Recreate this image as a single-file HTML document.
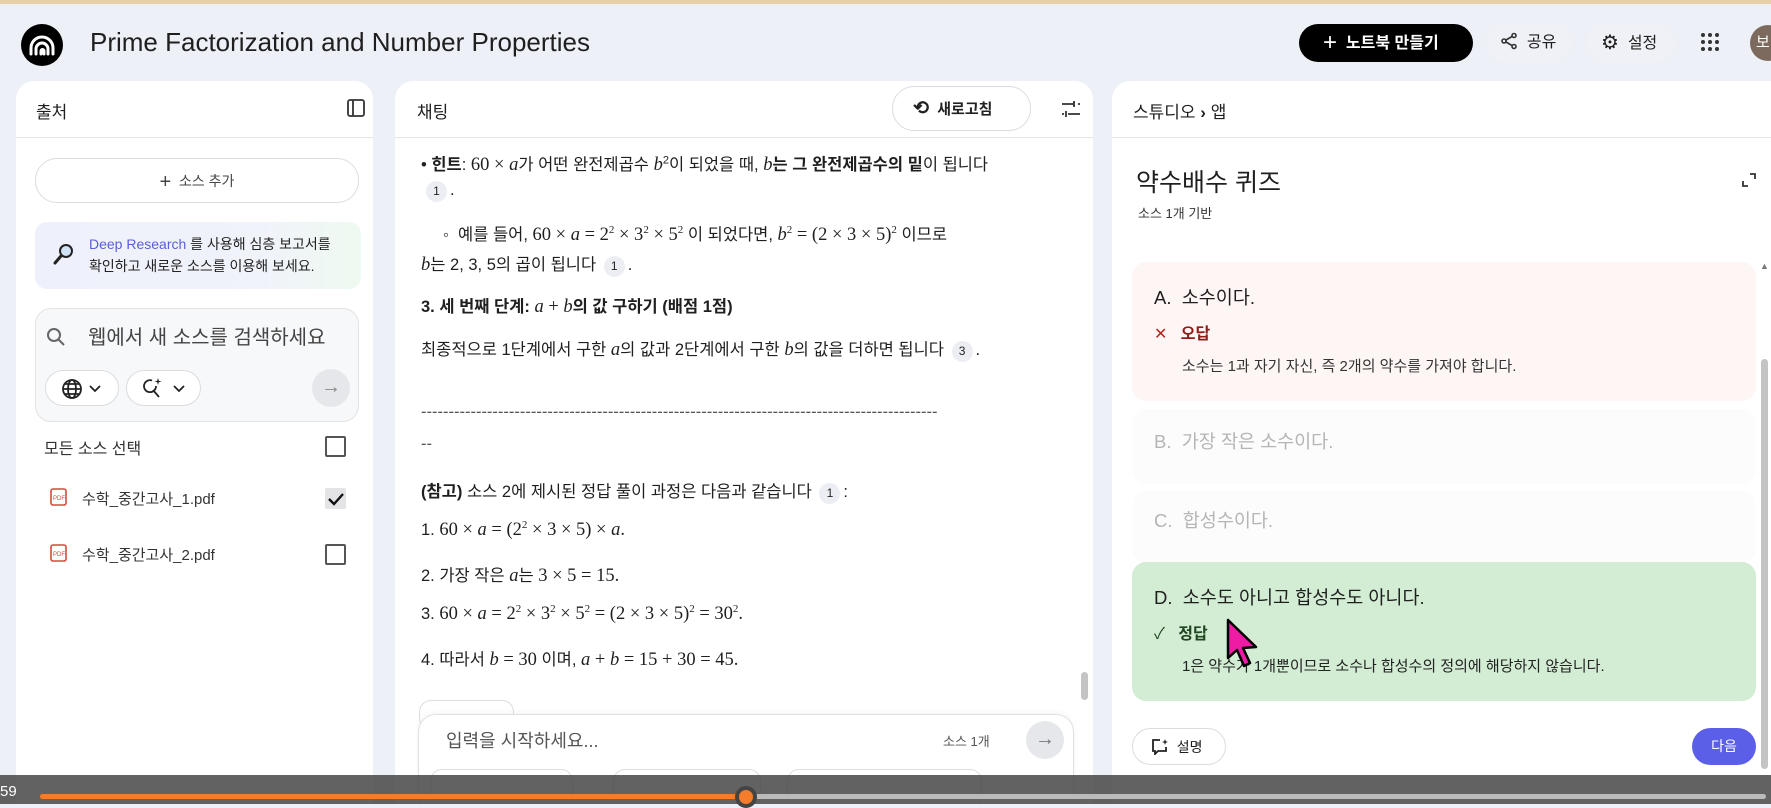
<!DOCTYPE html>
<html><head><meta charset="utf-8">
<style>
*{margin:0;padding:0;box-sizing:border-box}
body{width:1771px;height:804px;overflow:hidden;background:#eef0f8;font-family:"Liberation Sans","Noto Sans CJK KR",sans-serif;color:#1f1f1f;position:relative}
.a{position:absolute;white-space:nowrap}
.panel{position:absolute;background:#fff;border-radius:18px 18px 0 0;top:81px;height:723px;overflow:hidden}
.m{font-family:"Liberation Serif",serif;font-size:18.5px}
.i{font-style:italic}
.cite{display:inline-block;width:21px;height:21px;border-radius:11px;background:#eceef4;font-size:12px;text-align:center;line-height:21px;margin:0 3px}
.ct{font-size:16.5px;color:#1f1f1f}
.pill{position:absolute;border:1px solid #dadce0;border-radius:22px;background:#fff}
sup{font-size:11px}
</style></head><body>
<div class="a" style="left:0;top:0;width:1771px;height:4px;background:#e9cfa8"></div>
<!-- header -->
<div class="a" style="left:21px;top:24px;width:42px;height:42px;border-radius:50%;background:#000"></div>
<svg class="a" style="left:21px;top:24px" width="42" height="42" viewBox="0 0 42 42" fill="none" stroke="#fff" stroke-width="3" stroke-linecap="round"><path d="M10 30 V24 a11 11 0 0 1 22 0 V30"/><path d="M15 30 V25 a6 6 0 0 1 12 0 V30"/><path d="M20 30 V27 a1.5 1.5 0 0 1 3 0 V30"/></svg>
<div class="a" style="left:90px;top:27px;font-size:26px">Prime Factorization and Number Properties</div>
<div class="a" style="left:1299px;top:24px;width:174px;height:38px;background:#000;border-radius:19px;color:#fff;font-size:16px;font-weight:bold;line-height:38px;padding-left:24px"><span style="font-size:24px;font-weight:normal;vertical-align:-2px">+</span>&nbsp;&nbsp;노트북 만들기</div>
<div class="a" style="left:1486px;top:24px;width:86px;height:38px;border-radius:19px;background:#f0f1f6;font-size:16px;line-height:38px;padding-left:14px">
<svg width="18" height="18" viewBox="0 0 18 18" style="vertical-align:-3px" fill="none" stroke="#333" stroke-width="1.6"><circle cx="14" cy="3.5" r="2"/><circle cx="4" cy="9" r="2"/><circle cx="14" cy="14.5" r="2"/><path d="M6 8 12 4.5M6 10 12 13.5"/></svg>&nbsp;&nbsp;공유</div>
<div class="a" style="left:1587px;top:24px;width:88px;height:38px;border-radius:19px;background:#f0f1f6;font-size:16px;line-height:38px;padding-left:14px"><span style="font-size:20px;vertical-align:-1px">⚙</span>&nbsp;&nbsp;설정</div>
<svg class="a" style="left:1700px;top:32px" width="20" height="20"><g fill="#333"><circle cx="3" cy="3" r="2"/><circle cx="10" cy="3" r="2"/><circle cx="17" cy="3" r="2"/><circle cx="3" cy="10" r="2"/><circle cx="10" cy="10" r="2"/><circle cx="17" cy="10" r="2"/><circle cx="3" cy="17" r="2"/><circle cx="10" cy="17" r="2"/><circle cx="17" cy="17" r="2"/></g></svg>
<div class="a" style="left:1750px;top:25px;width:36px;height:36px;border-radius:50%;background:#7b6a5d;color:#fff;font-size:15px;line-height:36px;padding-left:6px">보</div>

<!-- left panel -->
<div class="panel" style="left:16px;width:357px">
<div class="a" style="left:20px;top:17px;font-size:17px">출처</div>
<svg class="a" style="left:331px;top:18px" width="18" height="18" fill="none" stroke="#333" stroke-width="1.8"><rect x="1" y="1" width="16" height="16" rx="2"/><path d="M6 1V17"/></svg>
<div class="a" style="left:0;top:56px;width:357px;height:1px;background:#e3e3e3"></div>
<div class="pill" style="left:19px;top:77px;width:324px;height:45px;text-align:center;line-height:44px;font-size:14px;color:#444"><span style="font-size:20px;vertical-align:-2px">+</span>&nbsp;&nbsp;소스 추가</div>
<div class="a" style="left:19px;top:141px;width:326px;height:67px;border-radius:12px;background:linear-gradient(90deg,#eef0fb,#f1f3fb 70%,#eefaf0)"></div>
<svg class="a" style="left:36px;top:161px" width="24" height="24" fill="none"><circle cx="14" cy="9" r="6" fill="#cfe3f5" stroke="#222" stroke-width="2"/><path d="M9 14 3 21" stroke="#222" stroke-width="3" stroke-linecap="round"/></svg>
<div class="a" style="left:73px;top:152px;font-size:14px;line-height:22px;color:#222"><span style="color:#5b5fd8">Deep Research</span> 를 사용해 심층 보고서를<br>확인하고 새로운 소스를 이용해 보세요.</div>
<div class="a" style="left:19px;top:227px;width:324px;height:114px;border:1px solid #e3e3e3;border-radius:16px;background:#f7f8fa"></div>
<svg class="a" style="left:30px;top:246px" width="20" height="20" fill="none" stroke="#666" stroke-width="2"><circle cx="8" cy="8" r="6"/><path d="M12.5 12.5 18 18"/></svg>
<div class="a" style="left:72px;top:240px;font-size:20px;color:#444">웹에서 새 소스를 검색하세요</div>
<div class="pill" style="left:29px;top:289px;width:74px;height:36px"></div>
<svg class="a" style="left:45px;top:297px" width="22" height="22" fill="none" stroke="#222" stroke-width="1.8"><circle cx="11" cy="11" r="9"/><ellipse cx="11" cy="11" rx="4" ry="9"/><path d="M2 11H20M4 6H18M4 16H18"/></svg>
<svg class="a" style="left:73px;top:303px" width="12" height="10" fill="none" stroke="#222" stroke-width="1.8"><path d="M1 2 6 7 11 2"/></svg>
<div class="pill" style="left:110px;top:289px;width:75px;height:36px"></div>
<svg class="a" style="left:125px;top:296px" width="24" height="22" fill="none" stroke="#222" stroke-width="1.8"><path d="M15 9a6 6 0 1 1-4-5.5"/><path d="M12 13 18 20"/><path d="M17 1 L17.8 3.7 20.5 4.5 17.8 5.3 17 8 16.2 5.3 13.5 4.5 16.2 3.7Z" fill="#222" stroke="none"/></svg>
<svg class="a" style="left:157px;top:303px" width="12" height="10" fill="none" stroke="#222" stroke-width="1.8"><path d="M1 2 6 7 11 2"/></svg>
<div class="a" style="left:296px;top:288px;width:38px;height:38px;border-radius:50%;background:#e6e7ea;color:#888;font-size:20px;text-align:center;line-height:36px">→</div>
<div class="a" style="left:28px;top:354px;font-size:16px;color:#333">모든 소스 선택</div>
<div class="a" style="left:309px;top:355px;width:21px;height:21px;border:2px solid #555;border-radius:2px"></div>
<svg class="a" style="left:34px;top:407px" width="17" height="18"><rect x="1" y="1" width="15" height="16" rx="2" fill="none" stroke="#d64a3a" stroke-width="1.6"/><text x="3" y="12" font-size="6" fill="#d64a3a" font-family="Liberation Sans">PDF</text></svg>
<div class="a" style="left:66px;top:407px;font-size:15px;color:#333">수학_중간고사_1.pdf</div>
<div class="a" style="left:309px;top:407px;width:21px;height:21px;background:#e4e4e6;border-radius:2px"></div>
<svg class="a" style="left:312px;top:411px" width="16" height="14" fill="none" stroke="#111" stroke-width="2.4"><path d="M1 7 6 12 15 2"/></svg>
<svg class="a" style="left:34px;top:463px" width="17" height="18"><rect x="1" y="1" width="15" height="16" rx="2" fill="none" stroke="#d64a3a" stroke-width="1.6"/><text x="3" y="12" font-size="6" fill="#d64a3a" font-family="Liberation Sans">PDF</text></svg>
<div class="a" style="left:66px;top:463px;font-size:15px;color:#333">수학_중간고사_2.pdf</div>
<div class="a" style="left:309px;top:463px;width:21px;height:21px;border:2px solid #555;border-radius:2px"></div>
</div>

<!-- chat panel -->
<div class="panel" style="left:395px;width:698px">
<div class="a" style="left:22px;top:17px;font-size:17px">채팅</div>
<div class="pill" style="left:497px;top:5px;width:139px;height:45px;font-size:15px;line-height:44px;padding-left:20px;font-weight:bold;color:#222"><span style="font-size:19px">⟲</span>&nbsp; 새로고침</div>
<svg class="a" style="left:666px;top:19px" width="20" height="18" stroke="#333" stroke-width="1.8"><path d="M1 4H13M17 4H19M1 14H3M7 14H19M13 1V7M5 11V17"/></svg>
<div class="a" style="left:0;top:56px;width:698px;height:1px;background:#e3e3e3"></div>
<div class="a ct" style="left:26px;top:70px">• <b>힌트</b>: <span class="m">60 × <span class="i">a</span></span>가 어떤 완전제곱수 <span class="m i">b</span><sup>2</sup>이 되었을 때, <span class="m i">b</span><b>는 그 완전제곱수의 밑</b>이 됩니다</div>
<div class="a ct" style="left:28px;top:100px"><span class="cite">1</span>.</div>
<div class="a ct" style="left:48px;top:140px">◦&nbsp; 예를 들어, <span class="m">60 × <span class="i">a</span> = 2<sup>2</sup> × 3<sup>2</sup> × 5<sup>2</sup></span> 이 되었다면, <span class="m"><span class="i">b</span><sup>2</sup> = (2 × 3 × 5)<sup>2</sup></span> 이므로</div>
<div class="a ct" style="left:26px;top:170px"><span class="m i">b</span>는 2, 3, 5의 곱이 됩니다 <span class="cite">1</span>.</div>
<div class="a ct" style="left:26px;top:212px;font-weight:bold">3. 세 번째 단계: <span class="m i" style="font-weight:normal">a</span> <span class="m" style="font-weight:normal">+</span> <span class="m i" style="font-weight:normal">b</span>의 값 구하기 (배점 1점)</div>
<div class="a ct" style="left:26px;top:255px">최종적으로 1단계에서 구한 <span class="m i">a</span>의 값과 2단계에서 구한 <span class="m i">b</span>의 값을 더하면 됩니다 <span class="cite">3</span>.</div>
<div class="a ct" style="left:26px;top:322px;color:#555">----------------------------------------------------------------------------------------------</div>
<div class="a ct" style="left:26px;top:354px;color:#555">--</div>
<div class="a ct" style="left:26px;top:397px"><b>(참고)</b> 소스 2에 제시된 정답 풀이 과정은 다음과 같습니다 <span class="cite">1</span>:</div>
<div class="a ct" style="left:26px;top:438px">1. <span class="m">60 × <span class="i">a</span> = (2<sup>2</sup> × 3 × 5) × <span class="i">a</span>.</span></div>
<div class="a ct" style="left:26px;top:481px">2. 가장 작은 <span class="m i">a</span>는 <span class="m">3 × 5 = 15.</span></div>
<div class="a ct" style="left:26px;top:522px">3. <span class="m">60 × <span class="i">a</span> = 2<sup>2</sup> × 3<sup>2</sup> × 5<sup>2</sup> = (2 × 3 × 5)<sup>2</sup> = 30<sup>2</sup>.</span></div>
<div class="a ct" style="left:26px;top:565px">4. 따라서 <span class="m"><span class="i">b</span> = 30</span> 이며, <span class="m"><span class="i">a</span> + <span class="i">b</span> = 15 + 30 = 45.</span></div>
<div class="a" style="left:686px;top:591px;width:7px;height:28px;border-radius:4px;background:#c4c4c4"></div>
<div class="a" style="left:24px;top:619px;width:95px;height:30px;border:1px solid #ddd;border-radius:12px"></div>
<div class="a" style="left:23px;top:633px;width:656px;height:100px;border:1px solid #e0e0e0;border-radius:18px;background:#fff;box-shadow:0 -2px 6px rgba(0,0,0,0.04)"></div>
<div class="a" style="left:51px;top:646px;font-size:18px;color:#555">입력을 시작하세요...</div>
<div class="a" style="left:548px;top:650px;font-size:13px;color:#555">소스 1개</div>
<div class="a" style="left:631px;top:640px;width:38px;height:38px;border-radius:50%;background:#e6e7ea;color:#777;font-size:20px;text-align:center;line-height:36px">→</div>
<div class="a" style="left:35px;top:688px;width:143px;height:40px;border:1px solid #ddd;border-radius:12px"></div>
<div class="a" style="left:218px;top:688px;width:148px;height:40px;border:1px solid #ddd;border-radius:12px"></div>
<div class="a" style="left:392px;top:688px;width:195px;height:40px;border:1px solid #ddd;border-radius:12px"></div>
</div>

<!-- right panel -->
<div class="panel" style="left:1112px;width:680px">
<div class="a" style="left:21px;top:17px;font-size:17px">스튜디오 <b>›</b> 앱</div>
<div class="a" style="left:0;top:56px;width:680px;height:1px;background:#e3e3e3"></div>
<div class="a" style="left:24px;top:82px;font-size:25px">약수배수 퀴즈</div>
<div class="a" style="left:26px;top:122px;font-size:13px;color:#333">소스 1개 기반</div>
<svg class="a" style="left:630px;top:92px" width="14" height="14" fill="none" stroke="#333" stroke-width="1.8"><path d="M1 8V13H6M8 1H13V6"/></svg>
<div class="a" style="left:20px;top:181px;width:624px;height:139px;border-radius:14px;background:#fdf6f4"></div>
<div class="a" style="left:42px;top:203px;font-size:18.5px">A.&nbsp; 소수이다.</div>
<div class="a" style="left:42px;top:239px;font-size:16px;color:#b3261e">✕&nbsp;&nbsp; <b style="color:#8c1d18">오답</b></div>
<div class="a" style="left:70px;top:274px;font-size:15px;color:#333">소수는 1과 자기 자신, 즉 2개의 약수를 가져야 합니다.</div>
<div class="a" style="left:20px;top:328px;width:624px;height:75px;border-radius:14px;background:#fcfcfd"></div>
<div class="a" style="left:42px;top:347px;font-size:18.5px;color:#b5b5b5">B.&nbsp; 가장 작은 소수이다.</div>
<div class="a" style="left:20px;top:410px;width:624px;height:72px;border-radius:14px;background:#fcfcfd"></div>
<div class="a" style="left:42px;top:426px;font-size:18.5px;color:#b5b5b5">C.&nbsp; 합성수이다.</div>
<div class="a" style="left:20px;top:481px;width:624px;height:139px;border-radius:14px;background:#d3edd4"></div>
<div class="a" style="left:42px;top:503px;font-size:18.5px">D.&nbsp; 소수도 아니고 합성수도 아니다.</div>
<div class="a" style="left:42px;top:539px;font-size:16px;color:#1e4620">✓&nbsp;&nbsp; <b>정답</b></div>
<div class="a" style="left:70px;top:574px;font-size:15px;color:#222">1은 약수가 1개뿐이므로 소수나 합성수의 정의에 해당하지 않습니다.</div>
<div class="pill" style="left:20px;top:647px;width:94px;height:37px;font-size:14px;line-height:36px;padding-left:18px"><svg width="18" height="17" style="vertical-align:-3px" fill="none" stroke="#222" stroke-width="1.8"><path d="M9 2H2V13H4V16L7 13H15V9"/><path d="M14 1 L14.8 3.2 17 4 14.8 4.8 14 7 13.2 4.8 11 4 13.2 3.2Z" fill="#222" stroke="none"/></svg>&nbsp; 설명</div>
<div class="a" style="left:580px;top:647px;width:64px;height:37px;border-radius:19px;background:#5b5fe8;color:#fff;font-size:14px;text-align:center;line-height:37px">다음</div>
<div class="a" style="left:648px;top:180px;font-size:9px;color:#777">▲</div>
<div class="a" style="left:649px;top:278px;width:7px;height:410px;border-radius:4px;background:#c4c4c4"></div>
</div>

<!-- cursor -->
<svg class="a" style="left:1226px;top:618px" width="36" height="52"><path d="M2 2 L2 40 L11 32 L18 48 L24 45 L17 30 L30 29 Z" fill="#ee1ba5" stroke="#000" stroke-width="2.5" stroke-linejoin="round"/></svg>

<!-- video bar -->
<div class="a" style="left:0;top:775px;width:1771px;height:29px;background:rgba(70,70,70,0.85)"></div>
<div class="a" style="left:0;top:783px;font-size:15px;color:#fff">59</div>
<div class="a" style="left:40px;top:794px;width:706px;height:5px;background:#f47c2b;border-radius:3px"></div>
<div class="a" style="left:746px;top:794px;width:1020px;height:5px;background:#bbb;border-radius:3px"></div>
<div class="a" style="left:735px;top:786px;width:22px;height:22px;border-radius:50%;background:#f47c2b;border:4px solid #444"></div>
</body></html>
